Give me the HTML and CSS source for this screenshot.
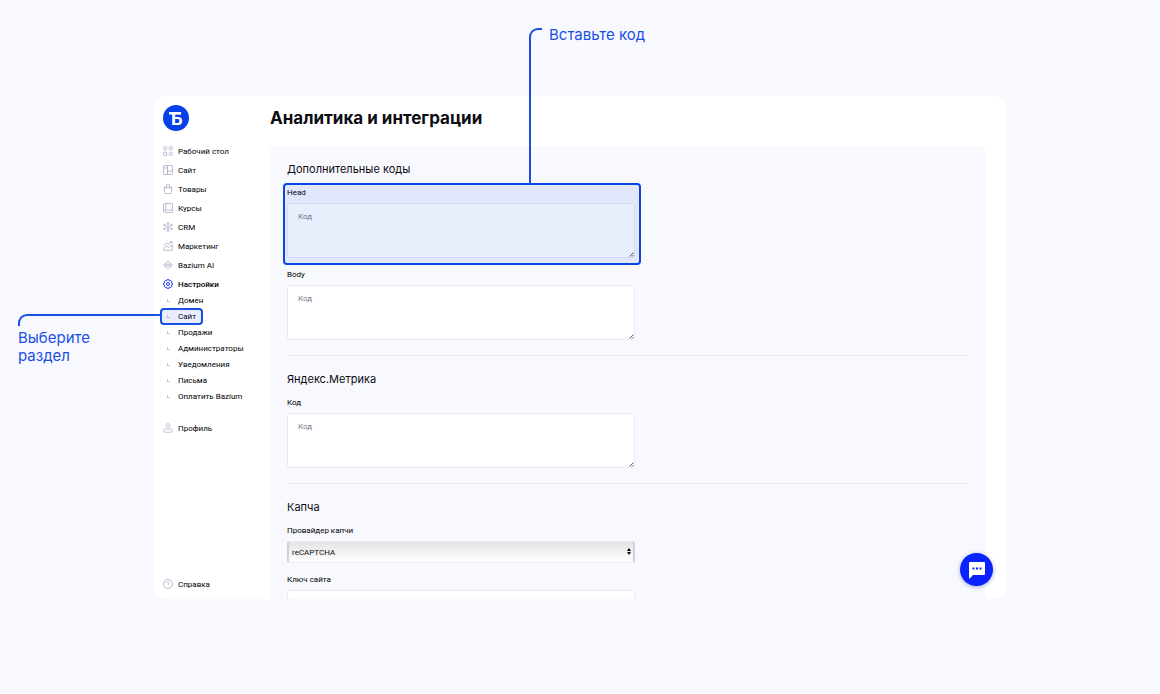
FILE: index.html
```
<!DOCTYPE html>
<html lang="ru">
  <head>
    <meta charset="UTF-8" />
    <meta name="viewport" content="width=device-width, initial-scale=1.0" />
    <title>Аналитика и интеграции</title>
    <link rel="stylesheet" href="styles.css">
  </head>
  <body>
    <div class="stage">
      <div class="window">
        <aside class="sidebar">
          <a href="#" class="logo" aria-label="Bazium">
            <svg viewBox="0 0 26 26" width="26" height="26">
              <circle cx="13" cy="13" r="13" fill="#0540e8" />
              <rect x="6" y="7" width="12" height="2.500" fill="#fff" />
              <text x="8" y="20" class="logo-letter">Б</text>
            </svg>
          </a>
          <nav class="nav">
            <ul class="menu">
              <li>
                <a href="#">
                  <svg class="icon" viewBox="0 0 10 10"><circle cx="2.2" cy="2.2" r="1.6" /><circle cx="7.8" cy="2.2" r="1.6" /><rect x=".6" y="6.2" width="3.2" height="3.2" rx=".5" /><circle cx="7.8" cy="7.8" r="1.6" /></svg>
                  Рабочий стол
                </a>
              </li>
              <li>
                <a href="#">
                  <svg class="icon" viewBox="0 0 10 10"><rect x=".5" y=".5" width="9" height="9" rx=".7" /><path d="M4.5 .5v9M4.5 6h5M.5 3h4" /></svg>
                  Сайт
                </a>
              </li>
              <li>
                <a href="#">
                  <svg class="icon" viewBox="0 0 10 10"><path d="M1 3.3h8l-.6 5.2q-.1 1-1 1H2.6q-.9 0-1-1zM3.2 4.8V2.3a1.8 1.8 0 0 1 3.6 0v2.5" /></svg>
                  Товары
                </a>
              </li>
              <li>
                <a href="#">
                  <svg class="icon" viewBox="0 0 10 10"><path d="M9.4 7V.6H1.6q-1 0-1 1v6.8q0 1 1 1h7.8V7H1.8q-1.2 0-1.2 1.3M2.8 .6V7" /></svg>
                  Курсы
                </a>
              </li>
              <li>
                <a href="#">
                  <svg class="icon" viewBox="0 0 10 10"><circle cx="5" cy="5" r="1.2" /><path d="M5 3.8V2M5 6.2V8M3.9 4.4L2 3.2M6.1 4.4L8 3.2M3.9 5.6L2 6.8M6.1 5.6L8 6.8" /><circle cx="5" cy="1.2" r=".8" /><circle cx="5" cy="8.8" r=".8" /><circle cx="1.4" cy="3" r=".8" /><circle cx="8.6" cy="3" r=".8" /><circle cx="1.4" cy="7" r=".8" /><circle cx="8.6" cy="7" r=".8" /></svg>
                  CRM
                </a>
              </li>
              <li>
                <a href="#">
                  <svg class="icon" viewBox="0 0 10 10"><path d="M.6 4.2l2.6-2 2 1.2L9 .7M7 .6h2.2v2M.6 9.2V7.4L3.4 5l2 1.4L9.4 4v5.2z" /></svg>
                  Маркетинг
                </a>
              </li>
              <li>
                <a href="#">
                  <svg class="icon" viewBox="0 0 10 10"><path d="M2.800 3.200a2.300 2.300 0 0 1 4.400 0L9.400 5 7.200 6.800a2.300 2.300 0 0 1-4.400 0L.6 5zM2.800 3.200v3.600M7.200 3.200v3.600" /><circle cx="5" cy="5" r="1" /></svg>
                  Bazium AI
                </a>
              </li>
              <li>
                <a href="#" class="active">
                  <svg class="icon" viewBox="0 0 10 10"><path d="M4.1.6h1.8l.4 1.2 1.2-.5 1.2 1.2-.5 1.2 1.2.4v1.8l-1.2.4.5 1.2-1.2 1.2-1.2-.5-.4 1.2H4.1l-.4-1.2-1.2.5-1.2-1.2.5-1.2L.6 5.900V4.100l1.2-.4-.5-1.2 1.2-1.2 1.2.5z" /><circle cx="5" cy="5" r="1.5" /></svg>
                  Настройки
                </a>
              </li>
            </ul>
            <ul class="submenu">
              <li><a href="#">Домен</a></li>
              <li><a href="#" class="marked">Сайт</a></li>
              <li><a href="#">Продажи</a></li>
              <li><a href="#">Администраторы</a></li>
              <li><a href="#">Уведомления</a></li>
              <li><a href="#">Письма</a></li>
              <li><a href="#">Оплатить Bazium</a></li>
            </ul>
            <ul class="menu">
              <li>
                <a href="#">
                  <svg class="icon" viewBox="0 0 10 10"><circle cx="5" cy="2.500" r="1.800" /><rect x=".8" y="6" width="8.400" height="3.200" rx="1.600" /></svg>
                  Профиль
                </a>
              </li>
            </ul>
          </nav>
          <ul class="menu help">
            <li>
              <a href="#">
                <svg class="icon" viewBox="0 0 10 10"><circle cx="5" cy="5" r="4.500" /><path d="M3.700 4a1.300 1.300 0 1 1 2 1.100q-.7.4-.7.900M5 7v.6" /></svg>
                Справка
              </a>
            </li>
          </ul>
        </aside>

        <main class="main">
          <h1>Аналитика и интеграции</h1>
          <form class="panel">
            <section>
              <h2>Дополнительные коды</h2>
              <div class="field marked-field">
                <label for="head">Head</label>
                <div class="control">
                  <textarea id="head" placeholder="Код"></textarea>
                  <svg class="grip" viewBox="0 0 5 5"><path d="M.5 4.500l4-4M3 4.500L4.500 3" /></svg>
                </div>
              </div>
              <div class="field">
                <label for="body">Body</label>
                <div class="control">
                  <textarea id="body" placeholder="Код"></textarea>
                  <svg class="grip" viewBox="0 0 5 5"><path d="M.5 4.500l4-4M3 4.500L4.500 3" /></svg>
                </div>
              </div>
            </section>
            <section>
              <h2>Яндекс.Метрика</h2>
              <div class="field">
                <label for="metrika">Код</label>
                <div class="control">
                  <textarea id="metrika" placeholder="Код"></textarea>
                  <svg class="grip" viewBox="0 0 5 5"><path d="M.5 4.500l4-4M3 4.500L4.500 3" /></svg>
                </div>
              </div>
            </section>
            <section>
              <h2>Капча</h2>
              <div class="field">
                <label for="captcha">Провайдер капчи</label>
                <div class="control">
                  <select id="captcha">
                    <option>reCAPTCHA</option>
                  </select>
                  <svg class="arrows" viewBox="0 0 4 7"><path d="M0 3l2-3 2 3zM0 4l2 3 2-3z" /></svg>
                </div>
              </div>
              <div class="field">
                <label for="site-key">Ключ сайта</label>
                <input type="text" id="site-key" />
              </div>
            </section>
          </form>
        </main>

        <button class="chat-btn" aria-label="Чат">
          <svg viewBox="0 0 18 18" width="18" height="18">
            <path d="M2 1h14q1 0 1 1v11q0 1-1 1H5l-3.200 3.400q-.8.600-.8-.6V2q0-1 1-1z" fill="#fff" />
            <path d="M4.500 6.500h2v2h-2zM8 6.500h2v2H8zM11.500 6.500h2v2h-2z" fill="#0a22ff" />
          </svg>
        </button>
      </div>

      <div class="callout callout-code">Вставьте код</div>
      <div class="callout callout-section">Выберите<br />раздел</div>
    </div>
  </body>
</html>
```
FILE: styles.css
```
*,
*::before,
*::after {
  box-sizing: border-box;
}
body {
  font-family: Roboto, "Noto Sans", sans-serif;
  background-color: #f8f9fe;
  color: #0c0c12;
  margin: 0;
}
ul {
  list-style: none;
  margin: 0;
  padding: 0;
}
a {
  color: inherit;
  text-decoration: none;
}
.stage {
  position: relative;
  height: 100vh;
  padding: 96px 154px 95px;
}
.window {
  position: relative;
  display: flex;
  height: 100%;
  background-color: #ffffff;
  border-radius: 12px;
  overflow: hidden;
}
.sidebar {
  display: flex;
  flex-direction: column;
  width: 116px;
  padding: 9px 0 7px 9px;
}
.logo {
  display: block;
  height: 26px;
  margin-bottom: 12px;
}
.logo-letter {
  font-family: Inter, sans-serif;
  font-size: 18px;
  font-weight: 700;
  fill: #ffffff;
}
.menu {
  display: flex;
  flex-direction: column;
  gap: 3px;
}
.menu a,
.submenu a {
  display: flex;
  align-items: center;
  height: 16px;
  color: #000000;
  font-size: 8px;
  font-weight: 400;
  white-space: nowrap;
}
.menu a {
  gap: 5px;
}
.menu .active {
  font-weight: 500;
}
.icon {
  width: 10px;
  height: 10px;
  fill: none;
  stroke: #a9acc4;
  stroke-width: 0.8;
}
.active .icon {
  stroke: #1a38f0;
  stroke-width: 1;
}
.submenu {
  margin-bottom: 16px;
}
.submenu a {
  position: relative;
  gap: 8px;
  padding-left: 4px;
}
.submenu a::before {
  content: "";
  width: 3px;
  height: 3px;
  border-left: 1px solid #c4c6d4;
  border-bottom: 1px solid #c4c6d4;
}
.submenu .marked::after {
  content: "";
  position: absolute;
  top: 0;
  left: -3px;
  width: 43px;
  height: 17px;
  border: 2px solid #1a4fe6;
  border-radius: 4px;
  background-color: rgba(20, 60, 240, 0.09);
}
.help {
  margin-top: auto;
}
.main {
  flex: 1;
  padding: 10px 21px 0 0;
}
h1 {
  margin: 0 0 16px;
  font-family: Inter, "Noto Sans", sans-serif;
  font-size: 17px;
  font-weight: 700;
  line-height: 24px;
}
.panel {
  height: 600px;
  padding: 15px 16px 15px 17px;
  background-color: #f8f9fe;
  border-radius: 6px;
}
section {
  padding-bottom: 6px;
  margin-bottom: 15px;
  border-bottom: 1px solid #e6e8ee;
}
h2 {
  margin: 0 0 8px;
  font-family: Inter, "Noto Sans", sans-serif;
  font-size: 11px;
  font-weight: 400;
  line-height: 16px;
}
.field {
  position: relative;
  width: 51%;
  margin-bottom: 9px;
}
.field label {
  display: block;
  margin-bottom: 2px;
  color: #000000;
  font-size: 8px;
  font-weight: 400;
  line-height: 16px;
}
.marked-field::after {
  content: "";
  position: absolute;
  inset: -2px -6px -7px -4px;
  border: 2px solid #0a45e0;
  border-radius: 4px;
  background-color: rgba(0, 65, 225, 0.09);
  pointer-events: none;
}
.control {
  position: relative;
}
textarea,
select,
input {
  display: block;
  width: 100%;
  border: 1px solid #e6eaf2;
  border-radius: 3px;
  background-color: #ffffff;
  color: #0c0c12;
  font-family: inherit;
  font-size: 8px;
}
textarea {
  height: 55px;
  padding: 7px 10px;
  line-height: 12px;
  resize: none;
}
textarea::placeholder {
  color: #777a8a;
}
select {
  height: 22px;
  padding: 0 3px;
  appearance: none;
  border-left: 2px solid #cfd2d8;
  border-right: 2px solid #cfd2d8;
  background-image: linear-gradient(#e4e4e4, #ffffff);
}
input {
  height: 22px;
}
.grip {
  position: absolute;
  right: 1px;
  bottom: 1px;
  width: 5px;
  height: 5px;
  fill: none;
  stroke: #55575f;
  stroke-width: 1;
}
.arrows {
  position: absolute;
  right: 4px;
  top: 7px;
  width: 4px;
  height: 7px;
  pointer-events: none;
}
.chat-btn {
  position: absolute;
  right: 13px;
  bottom: 13px;
  display: flex;
  align-items: center;
  justify-content: center;
  width: 33px;
  height: 33px;
  padding: 0;
  border: none;
  border-radius: 50%;
  background-color: #0a22ff;
  box-shadow: 0 1px 4px rgba(20, 40, 160, 0.4);
  cursor: pointer;
}
.callout {
  position: absolute;
  color: #1a4fe6;
  font-family: Inter, "Noto Sans", sans-serif;
  font-size: 15px;
  line-height: 18px;
}
.callout::before {
  content: "";
  position: absolute;
  border: 0 solid #1a4fe6;
  border-top-width: 2px;
  border-left-width: 2px;
  border-top-left-radius: 9px;
}
.callout-code {
  top: 26px;
  left: 549px;
}
.callout-code::before {
  top: 2px;
  left: -20px;
  width: 13px;
  height: 156px;
}
.callout-section {
  top: 329px;
  left: 18px;
}
.callout-section::before {
  top: -15px;
  left: 0;
  width: 143px;
  height: 12px;
}
```
